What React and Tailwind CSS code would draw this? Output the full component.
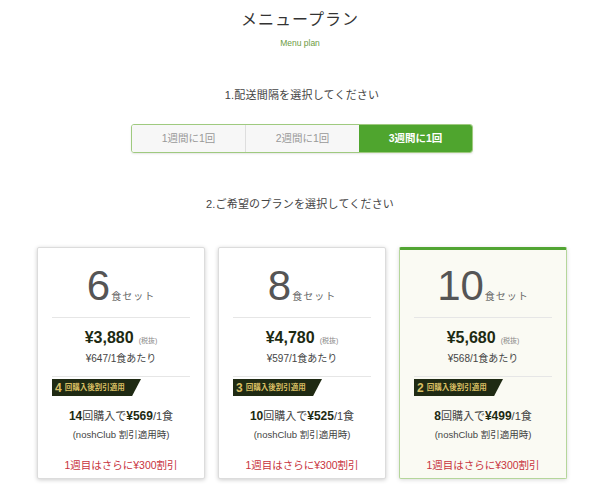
import React from 'react';

const font = { fontFamily: '"Liberation Sans", Arial, "Noto Sans CJK JP", sans-serif' };

const plans = [
  { count: '6', price: '¥3,880', per: '¥647/1食あたり', times: '4', buy: '14', unit: '¥569', active: false },
  { count: '8', price: '¥4,780', per: '¥597/1食あたり', times: '3', buy: '10', unit: '¥525', active: false },
  { count: '10', price: '¥5,680', per: '¥568/1食あたり', times: '2', buy: '8', unit: '¥499', active: true },
];

const PlanCard = ({ plan }) => (
  <div
    className={
      plan.active
        ? 'w-[168px] h-[232px] bg-[#fafaf3] border border-[#b5d69b] border-t-[3px] border-t-[#52a533] rounded-[2px] shadow-[0_1px_4px_rgba(0,0,0,0.15)] flex flex-col items-center'
        : 'w-[168px] h-[232px] bg-white border border-[#dcdcdc] rounded-[2px] shadow-[0_1px_4px_rgba(0,0,0,0.2)] flex flex-col items-center'
    }
  >
    <div className={plan.active ? 'flex items-baseline mt-[14px] h-[44px]' : 'flex items-baseline mt-[16px] h-[44px]'}>
      <span className="text-[42px] leading-[44px] text-[#555]">{plan.count}</span>
      <span className="text-[10px] text-[#666] tracking-[1px] ml-[1px]">食セット</span>
    </div>
    <div className="w-[138px] h-px bg-[#e6e6e6] mt-[9px]" />
    <div className="flex items-baseline mt-[8px] h-[22px]">
      <span className="text-[16px] font-bold text-[#1d2a12]">{plan.price}</span>
      <span className="text-[7px] text-[#888] ml-[5px]">(税抜)</span>
    </div>
    <div className="text-[10px] text-[#444] mt-[4px] leading-[14px]">{plan.per}</div>
    <div className="w-[138px] h-px bg-[#e6e6e6] mt-[10px]" />
    <div className="w-[138px] mt-[2px]">
      <div className="w-[89px] h-[17px] bg-[#1f2a13] [clip-path:polygon(0_0,100%_0,90%_100%,0_100%)] flex items-center pl-[3px]">
        <span className="text-[12px] font-bold text-[#d9bf63] leading-none">{plan.times}</span>
        <span className="text-[7.5px] font-bold text-[#d9bf63] ml-[3px] leading-none">回購入後割引適用</span>
      </div>
    </div>
    <div className="mt-[13px] text-[11px] text-[#444] leading-[14px]">
      <span className="font-bold text-[#1d2a12] text-[12px]">{plan.buy}</span>回購入で<span className="font-bold text-[#1d2a12] text-[12px]">{plan.unit}</span>/1食
    </div>
    <div className="mt-[5px] text-[9.5px] text-[#444] leading-[13px]">(noshClub 割引適用時)</div>
    <div className="mt-[17px] text-[10.5px] text-[#c8323c] leading-[14px]">1週目はさらに¥300割引</div>
  </div>
);

export default function App() {
  return (
    <div className="w-[600px] h-[495px] bg-white overflow-hidden flex flex-col items-center" style={font}>
      <h1 className="mt-[8px] text-[16px] leading-[24px] text-[#333] tracking-[1px] font-normal">メニュープラン</h1>
      <div className="mt-[5px] text-[8.5px] text-[#6c9b3f] leading-[12px]">Menu plan</div>

      <div className="mt-[39px] ml-[4px] text-[11px] text-[#444] tracking-[0.2px] leading-[14px]">1.配送間隔を選択してください</div>

      <div className="mt-[22px] ml-[4px] w-[342px] h-[29px] flex border border-[#9fca7f] rounded-[3px] overflow-hidden shadow-[0_1px_2px_rgba(0,0,0,0.1)]">
        <div className="flex-1 flex items-center justify-center bg-[#f7f7f7] text-[10.5px] text-[#999] border-r border-[#dedede]">1週間に1回</div>
        <div className="flex-1 flex items-center justify-center bg-[#f7f7f7] text-[10.5px] text-[#999]">2週間に1回</div>
        <div className="flex-1 flex items-center justify-center bg-[#4fa52e] text-[10.5px] font-bold text-white">3週間に1回</div>
      </div>

      <div className="mt-[44px] text-[11px] text-[#444] tracking-[0.2px] leading-[14px]">2.ご希望のプランを選択してください</div>

      <div className="mt-[36px] ml-[4px] flex gap-[13px]">
        {plans.map((p, i) => (
          <PlanCard key={i} plan={p} />
        ))}
      </div>
    </div>
  );
}
